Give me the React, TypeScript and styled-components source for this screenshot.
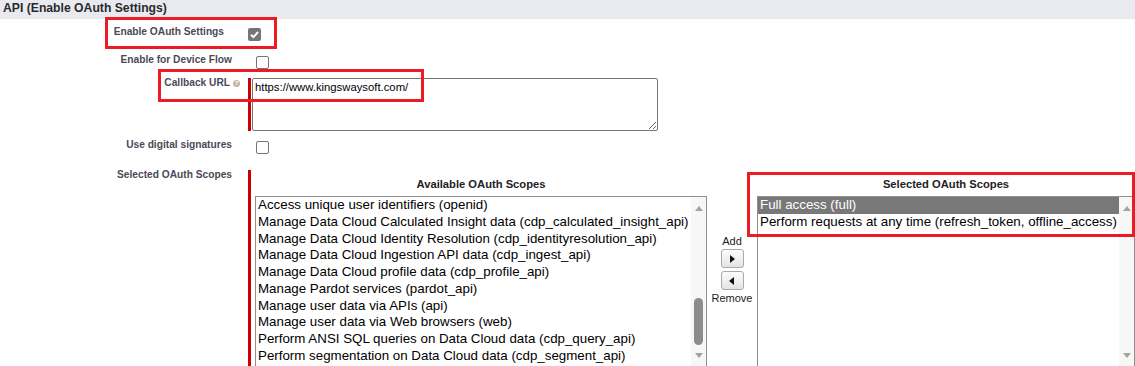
import styled, { createGlobalStyle } from 'styled-components';

const GlobalStyle = createGlobalStyle`
  html, body {
    margin: 0;
    padding: 0;
    background: #fff;
  }
  body {
    font-family: 'Liberation Sans', Arial, sans-serif;
    overflow: hidden;
  }
`;

const availableScopes = [
  'Access unique user identifiers (openid)',
  'Manage Data Cloud Calculated Insight data (cdp_calculated_insight_api)',
  'Manage Data Cloud Identity Resolution (cdp_identityresolution_api)',
  'Manage Data Cloud Ingestion API data (cdp_ingest_api)',
  'Manage Data Cloud profile data (cdp_profile_api)',
  'Manage Pardot services (pardot_api)',
  'Manage user data via APIs (api)',
  'Manage user data via Web browsers (web)',
  'Perform ANSI SQL queries on Data Cloud data (cdp_query_api)',
  'Perform segmentation on Data Cloud data (cdp_segment_api)',
];

const selectedScopes = [
  'Full access (full)',
  'Perform requests at any time (refresh_token, offline_access)',
];

const App = () => {
  return (
    <>
      <GlobalStyle />
      <Page>
        <SectionHeader>API (Enable OAuth Settings)</SectionHeader>

        <Row $top={6} $shift={8}>
          <Label>Enable OAuth Settings</Label>
          <Field>
            <CheckedBox>
              <svg width="13" height="13" viewBox="0 0 13 13">
                <path d="M3 6.8 L5.4 9.1 L10 4" stroke="#fff" strokeWidth="2" fill="none" />
              </svg>
            </CheckedBox>
          </Field>
        </Row>

        <Row $top={12}>
          <Label>Enable for Device Flow</Label>
          <Field>
            <EmptyBox />
          </Field>
        </Row>

        <Row $top={7}>
          <Label $help>
            Callback URL
            <HelpIcon>?</HelpIcon>
          </Label>
          <Field $required $offset={2}>
            <UrlInput defaultValue="https://www.kingswaysoft.com/" />
          </Field>
        </Row>

        <Row $top={7}>
          <Label>Use digital signatures</Label>
          <Field>
            <EmptyBox />
          </Field>
        </Row>

        <Row $top={14}>
          <Label>Selected OAuth Scopes</Label>
          <Field $required $offset={2}>
            <ScopePicker>
              <ScopeColumn $width={452}>
                <ColumnTitle>Available OAuth Scopes</ColumnTitle>
                <ListBox>
                  <Options>
                    {availableScopes.map((s) => (
                      <Option key={s}>{s}</Option>
                    ))}
                  </Options>
                  <Scrollbar>
                    <ArrowUp />
                    <Thumb />
                    <ArrowDown />
                  </Scrollbar>
                </ListBox>
              </ScopeColumn>

              <MoveButtons>
                <MoveLabel>Add</MoveLabel>
                <MoveButton>
                  <Triangle $dir="right" />
                </MoveButton>
                <MoveButton>
                  <Triangle $dir="left" />
                </MoveButton>
                <MoveLabel>Remove</MoveLabel>
              </MoveButtons>

              <ScopeColumn $width={378}>
                <ColumnTitle>Selected OAuth Scopes</ColumnTitle>
                <ListBox>
                  <Options>
                    {selectedScopes.map((s, i) => (
                      <Option key={s} $selected={i === 0}>
                        {s}
                      </Option>
                    ))}
                  </Options>
                  <Scrollbar>
                    <ArrowUp />
                    <ArrowDown />
                  </Scrollbar>
                </ListBox>
              </ScopeColumn>
            </ScopePicker>
          </Field>
        </Row>

        {/* red annotation frames drawn over the form */}
        <Highlight style={{ left: 105, top: 17, width: 172, height: 32 }} />
        <Highlight style={{ left: 158, top: 69, width: 266, height: 33 }} />
        <Highlight style={{ left: 747, top: 172, width: 388, height: 65 }} />
      </Page>
    </>
  );
};

const Page = styled.div`
  position: relative;
  width: 1135px;
  height: 366px;
  overflow: hidden;
`;

const SectionHeader = styled.div`
  height: 19px;
  line-height: 17px;
  padding-left: 3px;
  background: #e8eaf0;
  font-size: 12.2px;
  font-weight: bold;
  color: #2a2a2a;
`;

const Row = styled.div<{ $top: number; $shift?: number }>`
  display: grid;
  grid-template-columns: ${(p) => 248 - (p.$shift || 0)}px 1fr;
  align-items: start;
  padding-top: ${(p) => p.$top}px;
`;

const Label = styled.div<{ $help?: boolean }>`
  display: flex;
  justify-content: flex-end;
  align-items: center;
  padding-right: ${(p) => (p.$help ? 8 : 16)}px;
  font-size: 10.2px;
  line-height: 14px;
  font-weight: bold;
  color: #4a4a56;
  white-space: nowrap;
`;

const HelpIcon = styled.span`
  display: inline-flex;
  align-items: center;
  justify-content: center;
  width: 7px;
  height: 7px;
  margin-left: 3px;
  border-radius: 50%;
  background: #c3b79f;
  color: #fff;
  font-size: 6px;
  font-weight: bold;
  line-height: 7px;
`;

const Field = styled.div<{ $required?: boolean; $offset?: number }>`
  display: flex;
  margin-top: ${(p) => p.$offset ?? 3}px;
  padding-left: ${(p) => (p.$required ? 1 : 8)}px;
  border-left: ${(p) => (p.$required ? '3px solid #c00' : 'none')};
`;

const EmptyBox = styled.span`
  box-sizing: border-box;
  width: 13px;
  height: 13px;
  border: 1px solid #767676;
  border-radius: 2px;
  background: #fff;
`;

const CheckedBox = styled.span`
  display: flex;
  width: 13px;
  height: 13px;
  border-radius: 2px;
  background: #767676;
`;

const UrlInput = styled.textarea`
  box-sizing: border-box;
  width: 406px;
  height: 53px;
  margin: 0;
  padding: 2px 2px;
  border: 1px solid #767676;
  border-radius: 2px;
  font-family: 'Liberation Sans', Arial, sans-serif;
  font-size: 11.3px;
  color: #000;
  resize: both;
  outline: none;
`;

const ScopePicker = styled.div`
  display: flex;
  align-items: flex-start;
  padding-left: 3px;
`;

const ScopeColumn = styled.div<{ $width: number }>`
  display: flex;
  flex-direction: column;
  width: ${(p) => p.$width}px;
`;

const ColumnTitle = styled.div`
  margin-top: 7px;
  height: 14px;
  line-height: 14px;
  text-align: center;
  font-size: 11.2px;
  font-weight: bold;
  color: #222;
`;

const ListBox = styled.div`
  display: flex;
  margin-top: 5px;
  height: 174px;
  border: 1px solid #8f8f8f;
  background: #fff;
`;

const Options = styled.div`
  flex: 1;
  min-width: 0;
`;

const Option = styled.div<{ $selected?: boolean }>`
  height: 16.75px;
  line-height: 16px;
  padding: 0 2px;
  font-size: 13.33px;
  white-space: nowrap;
  color: ${(p) => (p.$selected ? '#fff' : '#000')};
  background: ${(p) => (p.$selected ? '#787878' : 'transparent')};
`;

const Scrollbar = styled.div`
  display: flex;
  flex-direction: column;
  align-items: center;
  width: 15px;
  padding: 9px 0 13px;
  box-sizing: border-box;
  background: #f7f7f7;
`;

const ArrowUp = styled.span`
  width: 0;
  height: 0;
  border-left: 4.5px solid transparent;
  border-right: 4.5px solid transparent;
  border-bottom: 5px solid #a3a3a3;
`;

const ArrowDown = styled.span`
  width: 0;
  height: 0;
  margin-top: auto;
  border-left: 4.5px solid transparent;
  border-right: 4.5px solid transparent;
  border-top: 5px solid #a3a3a3;
`;

const Thumb = styled.span`
  width: 9px;
  height: 47px;
  margin-top: auto;
  margin-bottom: -8px;
  border-radius: 5px;
  background: #8c8c8c;
  & + ${ArrowDown} {
    margin-top: 16px;
  }
`;

const MoveButtons = styled.div`
  display: flex;
  flex-direction: column;
  align-items: center;
  width: 50px;
  padding-top: 65px;
`;

const MoveLabel = styled.div`
  font-size: 11px;
  line-height: 13px;
  color: #222;
`;

const MoveButton = styled.div`
  display: flex;
  align-items: center;
  justify-content: center;
  box-sizing: border-box;
  width: 23px;
  height: 19px;
  margin: 1px 0 2px;
  border: 1px solid #a9a9a9;
  border-radius: 3px;
  background: linear-gradient(#fdfdfd, #e4e4e4);
`;

const Triangle = styled.span<{ $dir: 'left' | 'right' }>`
  width: 0;
  height: 0;
  border-top: 4.5px solid transparent;
  border-bottom: 4.5px solid transparent;
  ${(p) =>
    p.$dir === 'right'
      ? 'border-left: 5px solid #111; margin-left: 1px;'
      : 'border-right: 5px solid #111; margin-right: 1px;'}
`;

const Highlight = styled.div`
  position: absolute;
  box-sizing: border-box;
  border: 3px solid #ed1c24;
  pointer-events: none;
`;

export default App;
